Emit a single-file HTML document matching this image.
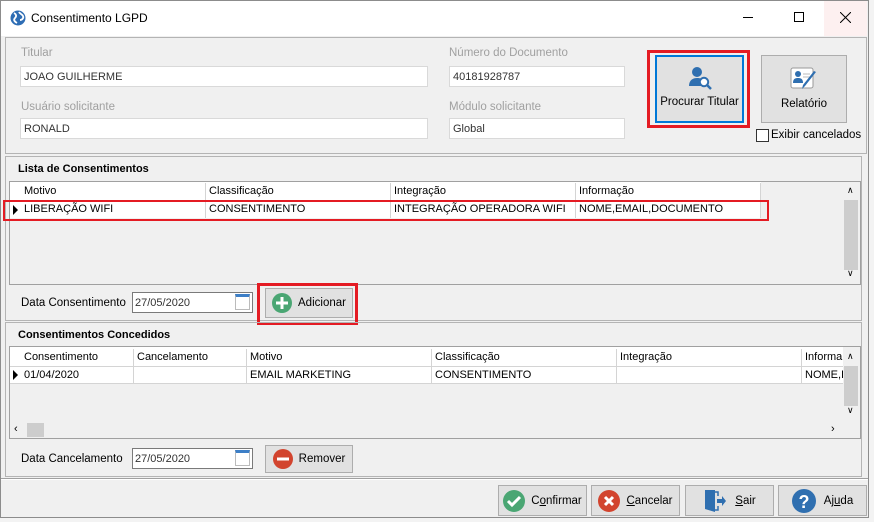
<!DOCTYPE html>
<html><head><meta charset="utf-8"><style>
*{box-sizing:border-box;margin:0;padding:0}
body{width:874px;height:522px;background:#f3f3f3;font-family:"Liberation Sans",sans-serif;font-size:11px;color:#000;position:relative;overflow:hidden}
.a{position:absolute}
.win{left:0;top:0;width:869px;height:518px;border:1px solid #8c8c8c;background:#f0f0f0}
.title{left:1px;top:1px;width:866px;height:35px;background:#fff}
.lbl{color:#a0a0a0;font-size:11.5px}
.inp{background:#fff;border:1px solid #d9d9d9;padding:0 3px;font-size:11px;color:#333;height:21px;display:flex;align-items:center}
.panel{border:1px solid #b4b4b4}
.hdr{font-weight:bold;font-size:11px}
.grid{background:#f0f0f0;border:1px solid #a0a0a0}
.cell{position:absolute;font-size:11px;padding-left:3px;border-right:1px solid #d4d4d4;height:17px;line-height:17px;background:#fff;white-space:nowrap;overflow:hidden}
.btn{background:#e1e1e1;border:1px solid #adadad;font-size:11.5px;display:flex;align-items:center;justify-content:center}
.red{border:3px solid #e41b23}
</style></head><body>
<div class="a win"></div>
<div class="a title"></div>
<svg class="a" style="left:10px;top:10px" width="16" height="16" viewBox="0 0 16 16"><circle cx="8" cy="8" r="7.5" fill="#2e6db4"/><path d="M4 3c2 1 3 3 1 5s0 4 2 5M9 2c1 2 3 2 4 4s-1 4-3 4" stroke="#fff" stroke-width="1.8" fill="none"/></svg>
<div class="a" style="left:31px;top:11px;font-size:12px">Consentimento LGPD</div>
<div class="a" style="left:743px;top:17px;width:10px;height:1px;background:#000"></div>
<div class="a" style="left:794px;top:12px;width:10px;height:10px;border:1px solid #000"></div>
<div class="a" style="left:824px;top:1px;width:43px;height:35px;background:#fdf0f0"></div>
<svg class="a" style="left:840px;top:12px" width="11" height="11" viewBox="0 0 11 11"><path d="M0 0L11 11M11 0L0 11" stroke="#000" stroke-width="1"/></svg>

<div class="a panel" style="left:5px;top:37px;width:862px;height:117px"></div>
<div class="a lbl" style="left:21px;top:47px">Titular</div>
<div class="a inp" style="left:20px;top:66px;width:408px">JOAO GUILHERME</div>
<div class="a lbl" style="left:449px;top:47px">Número do Documento</div>
<div class="a inp" style="left:449px;top:66px;width:176px">40181928787</div>
<div class="a lbl" style="left:21px;top:101px">Usuário solicitante</div>
<div class="a inp" style="left:20px;top:118px;width:408px">RONALD</div>
<div class="a lbl" style="left:449px;top:101px">Módulo solicitante</div>
<div class="a inp" style="left:449px;top:118px;width:176px">Global</div>

<div class="a red" style="left:647px;top:50px;width:103px;height:78px"></div>
<div class="a btn" style="left:655px;top:55px;width:89px;height:68px;border:2px solid #0078d7;flex-direction:column;justify-content:flex-start;padding-top:9px">
<svg width="26" height="24" viewBox="0 0 26 24"><circle cx="10" cy="6" r="5" fill="#2f6fb0"/><path d="M2 20c0-6 4-8 8-8s6 1 7 3v5z" fill="#2f6fb0"/><circle cx="17" cy="16" r="4.2" fill="#fff" stroke="#2f6fb0" stroke-width="2"/><path d="M20 19l4 4" stroke="#2f6fb0" stroke-width="2.5"/></svg>
<div style="margin-top:6px">Procurar Titular</div></div>
<div class="a btn" style="left:761px;top:55px;width:86px;height:68px;flex-direction:column;justify-content:flex-start;padding-top:10px">
<svg width="30" height="28" viewBox="0 0 30 28"><rect x="2" y="2" width="22" height="20" rx="2" fill="#fff" stroke="#999"/><circle cx="9" cy="8" r="3" fill="#2f6fb0"/><path d="M4 17c0-4 2-5 5-5s5 1 5 5z" fill="#2f6fb0"/><path d="M14 8h7M14 11h7" stroke="#bbb"/><path d="M27 6l-11 14-3 3 1-4 11-14z" fill="#2f6fb0"/></svg>
<div style="margin-top:4px">Relatório</div></div>
<div class="a" style="left:756px;top:129px;width:13px;height:13px;border:1px solid #333;background:#fff"></div>
<div class="a" style="left:771px;top:129px;font-size:11.5px">Exibir cancelados</div>

<div class="a panel" style="left:5px;top:156px;width:857px;height:165px"></div>
<div class="a hdr" style="left:18px;top:163px">Lista de Consentimentos</div>
<div class="a grid" style="left:9px;top:181px;width:852px;height:104px"></div>
<div class="a" style="left:10px;top:182px;width:751px;height:36px;background:#fff"></div>
<div class="cell" style="left:21px;top:183px;width:185px">Motivo</div>
<div class="cell" style="left:206px;top:183px;width:185px">Classificação</div>
<div class="cell" style="left:391px;top:183px;width:185px">Integração</div>
<div class="cell" style="left:576px;top:183px;width:185px">Informação</div>
<div class="a" style="left:10px;top:200px;width:751px;height:1px;background:#d4d4d4"></div>
<div class="cell" style="left:21px;top:201px;width:185px">LIBERAÇÃO WIFI</div>
<div class="cell" style="left:206px;top:201px;width:185px">CONSENTIMENTO</div>
<div class="cell" style="left:391px;top:201px;width:185px">INTEGRAÇÃO OPERADORA WIFI</div>
<div class="cell" style="left:576px;top:201px;width:185px">NOME,EMAIL,DOCUMENTO</div>
<div class="a" style="left:13px;top:205px;width:0;height:0;border-left:5px solid #000;border-top:5px solid transparent;border-bottom:5px solid transparent"></div>
<div class="a red" style="left:3px;top:200px;width:766px;height:21px;border-width:2px"></div>
<div class="a" style="left:844px;top:200px;width:14px;height:70px;background:#cdcdcd"></div>
<div class="a" style="left:847px;top:185px;font-size:9px">&#x2227;</div>
<div class="a" style="left:847px;top:268px;font-size:9px">&#x2228;</div>
<div class="a" style="left:21px;top:297px;font-size:11.5px">Data Consentimento</div>
<div class="a inp" style="left:132px;top:292px;width:121px;border-color:#7a7a7a;padding:0 2px">27/05/2020</div>
<div class="a" style="left:235px;top:294px;width:15px;height:16px;background:#fff;border:1px solid #bbb;border-top:3px solid #3d7fc7"></div>
<div class="a red" style="left:257px;top:283px;width:101px;height:42px"></div>
<div class="a btn" style="left:265px;top:288px;width:88px;height:30px"><svg width="20" height="20" viewBox="0 0 20 20" style="margin-right:6px"><circle cx="10" cy="10" r="10" fill="#4aa673"/><path d="M10 4v12M4 10h12" stroke="#fff" stroke-width="3"/></svg>Adicionar</div>

<div class="a panel" style="left:5px;top:322px;width:857px;height:155px"></div>
<div class="a hdr" style="left:18px;top:329px">Consentimentos Concedidos</div>
<div class="a grid" style="left:9px;top:346px;width:852px;height:93px"></div>
<div class="a" style="left:10px;top:347px;width:833px;height:36px;background:#fff"></div>
<div class="cell" style="left:21px;top:349px;width:113px">Consentimento</div>
<div class="cell" style="left:134px;top:349px;width:113px">Cancelamento</div>
<div class="cell" style="left:247px;top:349px;width:185px">Motivo</div>
<div class="cell" style="left:432px;top:349px;width:185px">Classificação</div>
<div class="cell" style="left:617px;top:349px;width:185px">Integração</div>
<div class="cell" style="left:802px;top:349px;width:41px;border:0">Informa</div>
<div class="a" style="left:10px;top:366px;width:833px;height:1px;background:#d4d4d4"></div>
<div class="cell" style="left:21px;top:367px;width:113px">01/04/2020</div>
<div class="cell" style="left:134px;top:367px;width:113px"></div>
<div class="cell" style="left:247px;top:367px;width:185px">EMAIL MARKETING</div>
<div class="cell" style="left:432px;top:367px;width:185px">CONSENTIMENTO</div>
<div class="cell" style="left:617px;top:367px;width:185px"></div>
<div class="cell" style="left:802px;top:367px;width:41px;border:0">NOME,I</div>
<div class="a" style="left:10px;top:383px;width:833px;height:1px;background:#d4d4d4"></div>
<div class="a" style="left:13px;top:370px;width:0;height:0;border-left:5px solid #000;border-top:5px solid transparent;border-bottom:5px solid transparent"></div>
<div class="a" style="left:844px;top:366px;width:14px;height:40px;background:#cdcdcd"></div>
<div class="a" style="left:847px;top:351px;font-size:9px">&#x2227;</div>
<div class="a" style="left:847px;top:405px;font-size:9px">&#x2228;</div>
<div class="a" style="left:27px;top:423px;width:17px;height:14px;background:#cdcdcd"></div>
<div class="a" style="left:14px;top:423px;font-size:11px">&#x2039;</div>
<div class="a" style="left:831px;top:423px;font-size:11px">&#x203A;</div>
<div class="a" style="left:21px;top:453px;font-size:11.5px">Data Cancelamento</div>
<div class="a inp" style="left:132px;top:448px;width:121px;border-color:#7a7a7a;padding:0 2px">27/05/2020</div>
<div class="a" style="left:235px;top:450px;width:15px;height:16px;background:#fff;border:1px solid #bbb;border-top:3px solid #3d7fc7"></div>
<div class="a btn" style="left:265px;top:445px;width:88px;height:28px"><svg width="20" height="20" viewBox="0 0 20 20" style="margin-right:6px"><circle cx="10" cy="10" r="10" fill="#d2442e"/><path d="M4 10h12" stroke="#fff" stroke-width="3"/></svg>Remover</div>

<div class="a" style="left:1px;top:478px;width:867px;height:2px;border-top:1px solid #a0a0a0;border-bottom:1px solid #fff"></div>
<div class="a btn" style="left:498px;top:485px;width:89px;height:31px"><svg width="22" height="22" viewBox="0 0 22 22" style="margin-right:6px"><circle cx="11" cy="11" r="11" fill="#4aa673"/><path d="M5 11l4 4 8-8" stroke="#fff" stroke-width="3" fill="none"/></svg>C<u>o</u>nfirmar</div>
<div class="a btn" style="left:591px;top:485px;width:89px;height:31px"><svg width="22" height="22" viewBox="0 0 22 22" style="margin-right:6px"><circle cx="11" cy="11" r="11" fill="#d2442e"/><path d="M7 7l8 8M15 7l-8 8" stroke="#fff" stroke-width="3"/></svg><u>C</u>ancelar</div>
<div class="a btn" style="left:685px;top:485px;width:89px;height:31px"><svg width="24" height="26" viewBox="0 0 24 26" style="margin-right:8px"><path d="M2 2h10v22l-10-3z" fill="#2f6fb0"/><path d="M12 4h3v4M15 18v4h-3" stroke="#2f6fb0" stroke-width="1.5" fill="none"/><path d="M14 11h5v-3l4 5-4 5v-3h-5z" fill="#2f6fb0"/></svg><u>S</u>air</div>
<div class="a btn" style="left:778px;top:485px;width:89px;height:31px"><svg width="24" height="24" viewBox="0 0 24 24" style="margin-right:8px"><circle cx="12" cy="12" r="12" fill="#2f6fb0"/><text x="12" y="19" text-anchor="middle" font-family="Liberation Sans" font-weight="bold" font-size="18" fill="#fff">?</text></svg>Aj<u>u</u>da</div>
</body></html>
